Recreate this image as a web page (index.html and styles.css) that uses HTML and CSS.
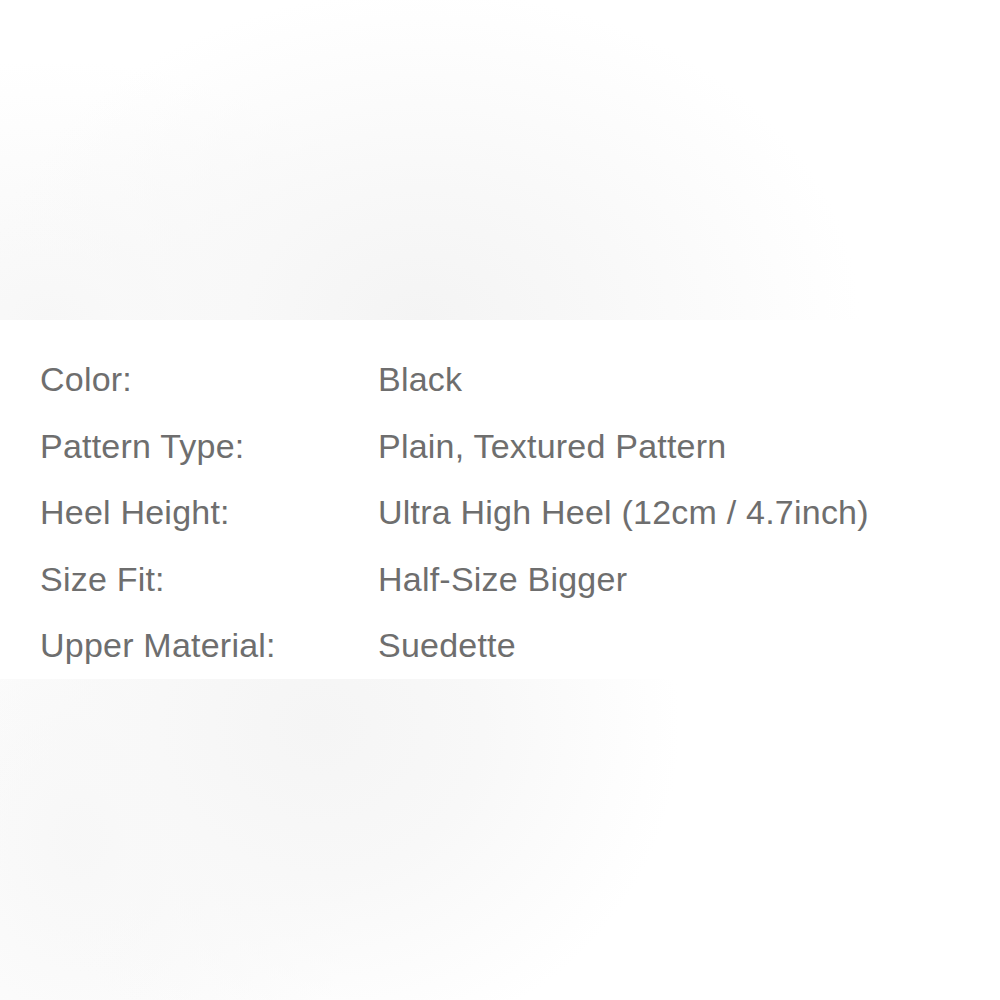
FILE: index.html
```html
<!DOCTYPE html>
<html>
<head>
<meta charset="utf-8">
<link rel="stylesheet" href="styles.css">
</head>
<body>
<div class="page">
  <div class="blur blur-top"></div>
  <section class="specs">
    <div class="row"><span class="label">Color:</span><span class="value">Black</span></div>
    <div class="row"><span class="label">Pattern Type:</span><span class="value">Plain, Textured Pattern</span></div>
    <div class="row"><span class="label">Heel Height:</span><span class="value">Ultra High Heel (12cm / 4.7inch)</span></div>
    <div class="row"><span class="label">Size Fit:</span><span class="value">Half-Size Bigger</span></div>
    <div class="row"><span class="label">Upper Material:</span><span class="value">Suedette</span></div>
  </section>
  <div class="blur blur-bottom"></div>
</div>
</body>
</html>
```
FILE: styles.css
```css
html, body {
  margin: 0;
  padding: 0;
  background: #ffffff;
}
.page {
  width: 1000px;
  height: 1000px;
  display: flex;
  flex-direction: column;
  overflow: hidden;
}
.blur-top {
  height: 320px;
  background:
    radial-gradient(ellipse 440px 330px at 42% 100%, #f4f4f4 0%, #f8f8f8 40%, rgba(255,255,255,0) 100%),
    radial-gradient(ellipse 380px 260px at 5% 100%, #f7f7f7 0%, rgba(255,255,255,0) 100%),
    #ffffff;
}
.specs {
  height: 359px;
  box-sizing: border-box;
  padding: 26px 0 0 40px;
  background: #ffffff;
  font-family: "Liberation Sans", Arial, Helvetica, sans-serif;
  font-size: 34px;
  letter-spacing: 0.22px;
  color: #6e6e6e;
}
.row {
  display: grid;
  grid-template-columns: 338px 1fr;
  line-height: 66.5px;
  white-space: nowrap;
}
.blur-bottom {
  flex: 1;
  background:
    radial-gradient(ellipse 360px 330px at 32% 15%, #f5f5f5 0%, #f8f8f8 45%, rgba(255,255,255,0) 100%),
    radial-gradient(ellipse 280px 360px at 8% 50%, #f7f7f7 0%, rgba(255,255,255,0) 100%),
    #ffffff;
}
```
